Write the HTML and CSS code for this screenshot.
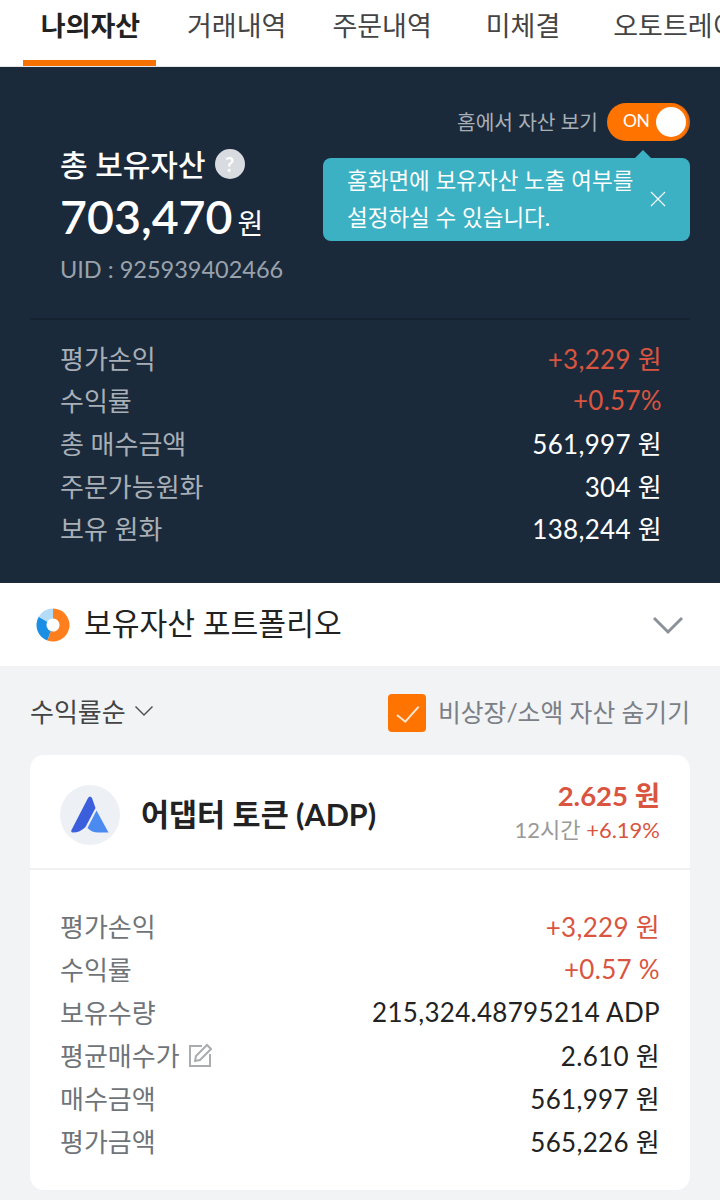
FILE: index.html
```html
<!DOCTYPE html>
<html lang="ko">
<head>
  <meta charset="utf-8">
  <title>나의자산</title>
  <link rel="stylesheet" href="styles.css">
</head>
<body>
  <div class="tabs">
    <a class="tab on">나의자산</a>
    <a class="tab t2">거래내역</a>
    <a class="tab t3">주문내역</a>
    <a class="tab t4">미체결</a>
    <a class="tab t5">오토트레이딩</a>
  </div>

  <div class="summary">
    <div class="home-toggle">
      <span>홈에서 자산 보기</span>
      <div class="switch"><b>ON</b><i></i></div>
    </div>
    <div class="tip">
      <p>홈화면에 보유자산 노출 여부를<br>설정하실 수 있습니다.</p>
      <svg class="tip-close" width="16" height="16" viewBox="0 0 16 16"><path d="M1 1l14 14M15 1L1 15" stroke="#fff" stroke-width="1.100" fill="none"/></svg>
    </div>
    <div class="total">
      <div class="total-title">총 보유자산 <span class="help">?</span></div>
      <div class="total-num">703,470<small>원</small></div>
      <div class="uid">UID : 925939402466</div>
    </div>
    <div class="rows">
      <div class="row"><span>평가손익</span><em class="red">+3,229 원</em></div>
      <div class="row"><span>수익률</span><em class="red">+0.57%</em></div>
      <div class="row"><span>총 매수금액</span><em>561,997 원</em></div>
      <div class="row"><span>주문가능원화</span><em>304 원</em></div>
      <div class="row"><span>보유 원화</span><em>138,244 원</em></div>
    </div>
  </div>

  <div class="portfolio">
    <svg width="34" height="34" viewBox="0 0 34 34">
      <path d="M17 .5A16.500 16.500 0 1 1 11.360 32.500L14.780 23.100A6.500 6.500 0 1 0 17 10.500Z" fill="#ff7f1f"/>
      <path d="M11.360 32.500A16.500 16.500 0 0 1 2.710 8.750L11.370 13.750A6.500 6.500 0 0 0 14.780 23.100Z" fill="#1a8fe3"/>
      <path d="M2.710 8.750A16.500 16.500 0 0 1 17 .5V10.500A6.500 6.500 0 0 0 11.370 13.750Z" fill="#b5dcf7"/>
    </svg>
    <h2>보유자산 포트폴리오</h2>
    <svg class="chev" width="32" height="20" viewBox="0 0 32 20"><path d="M2 3l14 14L30 3" stroke="#8b9299" stroke-width="3" fill="none"/></svg>
  </div>

  <div class="list">
    <div class="filter">
      <div class="sort">수익률순
        <svg width="20" height="12" viewBox="0 0 20 12"><path d="M1.500 1.500L10 10l8.500-8.500" stroke="#555" stroke-width="1.500" fill="none"/></svg>
      </div>
      <div class="hide">
        <div class="check"><svg width="38" height="38" viewBox="0 0 38 38"><path d="M9 21l8.300 6.700L30.700 12.700" stroke="#ffe6d2" stroke-width="2" fill="none"/></svg></div>
        <span>비상장/소액 자산 숨기기</span>
      </div>
    </div>

    <div class="card">
      <div class="card-head">
        <div class="logo">
          <svg width="38" height="37" viewBox="0 0 38 37">
            <path d="M17 2Q19-1 21 2L24.500 12L14.500 31Q9 36.500 2 36.500Q-.5 36.500 .5 34Z" fill="#3b5fdc"/>
            <path d="M25.500 14.500L37.500 36.500H27Q21 36.500 16.500 32Z" fill="#4b8bf0"/>
          </svg>
        </div>
        <div class="coin">어댑터 토큰 (ADP)</div>
        <div class="price">
          <strong>2.625 원</strong>
          <div class="change">12시간 <span>+6.19%</span></div>
        </div>
      </div>
      <div class="card-rows">
        <div class="row"><span>평가손익</span><em class="red">+3,229 원</em></div>
        <div class="row"><span>수익률</span><em class="red">+0.57 %</em></div>
        <div class="row"><span>보유수량</span><em>215,324.48795214 ADP</em></div>
        <div class="row"><span class="avg">평균매수가
          <svg width="24" height="24" viewBox="0 0 24 24"><path d="M14 3H2v20h20V11" stroke="#a9adb2" stroke-width="2" fill="none"/><path d="M7 18l1-5L19 2l4 4-11 11z" stroke="#a9adb2" stroke-width="2" fill="none"/></svg></span><em>2.610 원</em></div>
        <div class="row"><span>매수금액</span><em>561,997 원</em></div>
        <div class="row"><span>평가금액</span><em>565,226 원</em></div>
      </div>
    </div>
  </div>
</body>
</html>
```

FILE: styles.css
```css
* {
  box-sizing: border-box;
}
body {
  margin: 0;
  height: 1200px;
  overflow: hidden;
  background: #f1f3f5;
  font-family: Lato, "Noto Sans CJK KR", "Noto Sans", sans-serif;
  color: #222;
}
.tabs {
  height: 67px;
  background: #fff;
  border-bottom: 1px solid #e3e5e8;
  display: flex;
  overflow: hidden;
  white-space: nowrap;
}
.tab {
  flex: none;
  font-size: 27px;
  line-height: 52px;
  color: #444;
  padding: 0 18px;
  text-align: center;
}
.tab.on {
  width: 133px;
  margin-left: 23px;
  padding: 0 0 0 2px;
  height: 66px;
  font-weight: 700;
  color: #222;
  border-bottom: 6px solid #f57200;
}
.t2 {
  margin-left: 13px;
}
.t3 {
  margin-left: 10px;
}
.t4 {
  margin-left: 18px;
}
.t5 {
  margin-left: 17px;
}
.summary {
  position: relative;
  height: 516px;
  background: #1b2a3b;
  padding: 36px 30px 0;
}
.home-toggle {
  display: flex;
  justify-content: flex-end;
  align-items: center;
  gap: 9px;
  height: 38px;
  font-size: 20.300px;
  color: #a8afb7;
}
.home-toggle span {
  position: relative;
  top: -1px;
}
.switch {
  width: 83px;
  height: 38px;
  border-radius: 19px;
  background: #ff7300;
  border-right: 2px solid #d9691a;
  display: flex;
  align-items: center;
  justify-content: space-between;
  padding: 0 2px 0 16px;
}
.switch b {
  font-weight: 400;
  font-size: 17.500px;
  letter-spacing: -.4px;
  line-height: 36px;
  height: 38px;
  color: #fff;
}
.switch i {
  width: 30px;
  height: 30px;
  border-radius: 50%;
  background: #fff;
}
.tip {
  position: absolute;
  left: 323px;
  top: 91px;
  width: 367px;
  height: 83px;
  border-radius: 8px;
  background: #3cb1c3;
  color: #fff;
  font-size: 22.500px;
  line-height: 37px;
  padding: 4px 24px;
  white-space: nowrap;
}
.tip p {
  margin: 0;
}
.tip:before {
  content: "";
  position: absolute;
  left: 311px;
  top: -8px;
  border-left: 9px solid transparent;
  border-right: 9px solid transparent;
  border-bottom: 9px solid #3cb1c3;
}
.tip-close {
  position: absolute;
  right: 24px;
  top: 33px;
}
.total {
  margin-top: 1px;
  padding: 0 30px;
  height: 178px;
  border-bottom: 2px solid #152230;
}
.total-title {
  font-size: 30px;
  line-height: 44px;
  font-weight: 500;
  color: #fff;
  display: flex;
  align-items: center;
  gap: 9px;
}
.help {
  width: 30px;
  height: 30px;
  border-radius: 50%;
  background: #d8dbe0;
  color: #fff;
  font-size: 20px;
  font-weight: 700;
  line-height: 30px;
  text-align: center;
}
.total-num {
  font-size: 46.500px;
  line-height: 60px;
  font-weight: 600;
  color: #fff;
}
.total-num small {
  font-size: 28px;
  font-weight: 400;
  margin-left: 5px;
}
.uid {
  font-size: 23.500px;
  line-height: 32px;
  color: #9aa2ab;
}
.rows {
  padding: 16px 28px 0 30px;
}
.row {
  display: flex;
  justify-content: space-between;
  align-items: center;
  height: 42.600px;
  font-size: 26px;
}
.row span {
  color: #6f7479;
}
.row em {
  font-style: normal;
  letter-spacing: .3px;
  color: #222;
}
.rows .row span {
  color: #a8afb7;
}
.rows .row em {
  color: #fff;
}
.rows .row em.red,
.row em.red {
  color: #d9553f;
}
.portfolio {
  height: 83px;
  background: #fff;
  display: flex;
  align-items: center;
  padding: 0 36px;
  gap: 14px;
  position: relative;
}
.portfolio h2 {
  margin: 0 0 5px;
  font-size: 30.200px;
  font-weight: 400;
  color: #222;
  flex: 1;
}
.list {
  padding: 0 30px;
}
.filter {
  height: 89px;
  display: flex;
  justify-content: space-between;
  align-items: center;
}
.sort {
  font-size: 26px;
  color: #444;
  display: flex;
  align-items: center;
  gap: 8px;
}
.hide {
  display: flex;
  align-items: center;
  gap: 12px;
  font-size: 24.800px;
  color: #7b8086;
}
.check {
  width: 38px;
  height: 38px;
  border-radius: 4px;
  background: #ff7300;
  margin-top: 4px;
}
.card {
  height: 435px;
  background: #fff;
  border-radius: 14px;
}
.card-head {
  height: 115px;
  padding: 2px 30px 0;
  display: flex;
  align-items: center;
  border-bottom: 2px solid #f0f1f3;
}
.logo {
  width: 60px;
  height: 60px;
  margin-top: 4px;
  border-radius: 50%;
  background: #edf0f4;
  display: flex;
  align-items: center;
  justify-content: center;
}
.coin {
  flex: 1;
  margin-left: 21px;
  font-size: 30.500px;
  font-weight: 700;
}
.price {
  text-align: right;
  margin-top: -4px;
}
.price strong {
  display: block;
  font-size: 27.500px;
  line-height: 38px;
  font-weight: 700;
  color: #d9553f;
}
.change {
  font-size: 22px;
  line-height: 30px;
  color: #999;
}
.change span {
  color: #d9553f;
}
.card-rows {
  padding: 34px 30px 0;
}
.card-rows .row {
  height: 43px;
}
.avg {
  display: flex;
  align-items: center;
  gap: 8px;
}
```
